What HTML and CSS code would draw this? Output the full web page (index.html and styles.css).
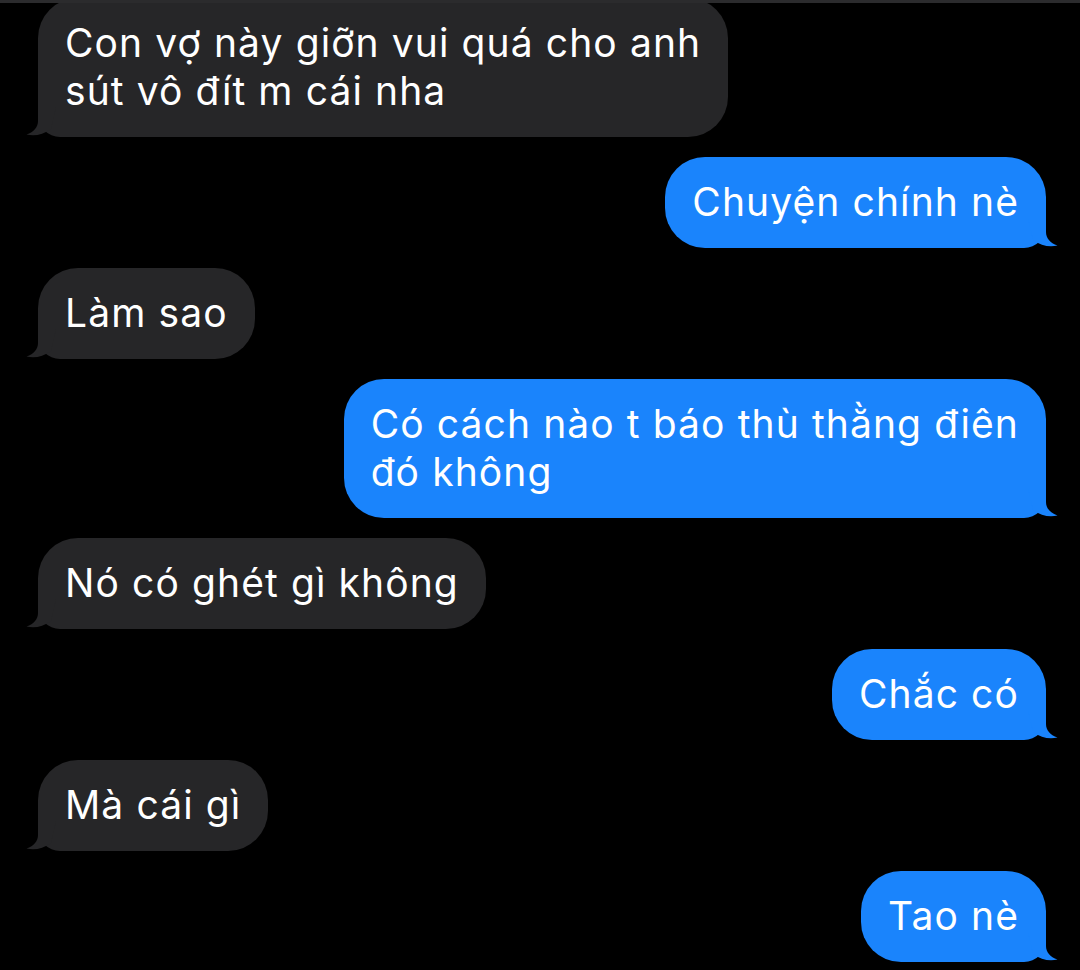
FILE: index.html
```html
<!DOCTYPE html>
<html lang="vi">
<head>
<meta charset="utf-8">
<title>Messages</title>
<link rel="stylesheet" href="styles.css">
</head>
<body>
<div class="topstrip"></div>
<main class="thread">
  <div class="msg them">Con vợ này giỡn vui quá cho anh<br>sút vô đít m cái nha<svg class="tail" viewBox="0 0 40 30"><path d="M12,0 L12,14 C12,20 8,25 0.5,27.5 C8,29.5 17,28 25,22 L30,0 Z"/></svg></div>
  <div class="msg me">Chuyện chính nè<svg class="tail" viewBox="0 0 40 30"><path d="M12,0 L12,14 C12,20 8,25 0.5,27.5 C8,29.5 17,28 25,22 L30,0 Z"/></svg></div>
  <div class="msg them">Làm sao<svg class="tail" viewBox="0 0 40 30"><path d="M12,0 L12,14 C12,20 8,25 0.5,27.5 C8,29.5 17,28 25,22 L30,0 Z"/></svg></div>
  <div class="msg me">Có cách nào t báo thù thằng điên<br>đó không<svg class="tail" viewBox="0 0 40 30"><path d="M12,0 L12,14 C12,20 8,25 0.5,27.5 C8,29.5 17,28 25,22 L30,0 Z"/></svg></div>
  <div class="msg them">Nó có ghét gì không<svg class="tail" viewBox="0 0 40 30"><path d="M12,0 L12,14 C12,20 8,25 0.5,27.5 C8,29.5 17,28 25,22 L30,0 Z"/></svg></div>
  <div class="msg me">Chắc có<svg class="tail" viewBox="0 0 40 30"><path d="M12,0 L12,14 C12,20 8,25 0.5,27.5 C8,29.5 17,28 25,22 L30,0 Z"/></svg></div>
  <div class="msg them">Mà cái gì<svg class="tail" viewBox="0 0 40 30"><path d="M12,0 L12,14 C12,20 8,25 0.5,27.5 C8,29.5 17,28 25,22 L30,0 Z"/></svg></div>
  <div class="msg me">Tao nè<svg class="tail" viewBox="0 0 40 30"><path d="M12,0 L12,14 C12,20 8,25 0.5,27.5 C8,29.5 17,28 25,22 L30,0 Z"/></svg></div>
</main>
</body>
</html>
```
FILE: styles.css
```css
html, body {
  margin: 0;
  padding: 0;
  background: #000;
  height: 970px;
  overflow: hidden;
}

body {
  position: relative;
  font-family: "Inter", "Roboto", "Liberation Sans", sans-serif;
}

.topstrip {
  position: absolute;
  top: 0;
  left: 0;
  right: 0;
  height: 3px;
  background: #2b2b2d;
  z-index: 5;
}

.thread {
  display: flex;
  flex-direction: column;
  gap: 20.5px;
  padding: 0 34px 0 38px;
  margin-top: -2px;
}

.msg {
  position: relative;
  font-size: 39px;
  letter-spacing: 1.1px;
  line-height: 48px;
  color: #fff;
  padding: 21px 27px 21.5px 27px;
  border-radius: 40px;
  width: fit-content;
  white-space: nowrap;
}

.msg .tail {
  position: absolute;
  bottom: 0;
  width: 40px;
  height: 30px;
}

.them {
  align-self: flex-start;
  background: #262628;
  border-bottom-left-radius: 22px;
}

.them .tail {
  left: -12px;
  fill: #262628;
}

.me {
  align-self: flex-end;
  background: #1a84fc;
  border-bottom-right-radius: 22px;
}

.me .tail {
  right: -12px;
  fill: #1a84fc;
  transform: scaleX(-1);
}
```
